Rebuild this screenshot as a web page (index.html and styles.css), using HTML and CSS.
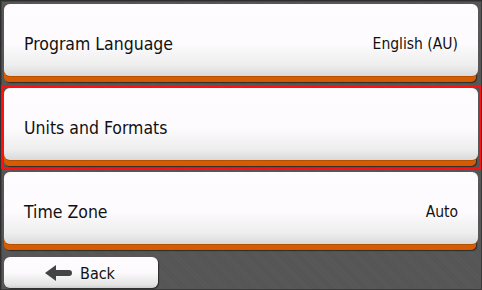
FILE: index.html
```html
<!DOCTYPE html>
<html>
<head>
<meta charset="utf-8">
<link rel="stylesheet" href="styles.css">
</head>
<body>
<div class="screen">
  <div class="row">
    <div class="card">
      <div class="face"><span class="label">Program Language</span><span class="value">English (AU)</span></div>
    </div>
  </div>
  <div class="row selected">
    <div class="card">
      <div class="face"><span class="label">Units and Formats</span></div>
    </div>
  </div>
  <div class="row">
    <div class="card">
      <div class="face"><span class="label">Time Zone</span><span class="value">Auto</span></div>
    </div>
  </div>
  <div class="footer">
    <div class="back">
      <svg class="arrow" width="28" height="16" viewBox="0 0 28 16">
        <path d="M0 8 L11 0 L11 5 L24 5 Q27 5 27 8 Q27 11 24 11 L11 11 L11 16 Z" fill="#444"/>
      </svg>
      <span class="back-label">Back</span>
    </div>
  </div>
</div>
</body>
</html>
```
FILE: styles.css
```css
html, body {
  margin: 0;
  padding: 0;
}
body {
  width: 482px;
  height: 290px;
  overflow: hidden;
  font-family: "DejaVu Sans Condensed", "DejaVu Sans", "Liberation Sans", sans-serif;
  font-stretch: condensed;
  color: #111;
}
.screen {
  box-sizing: border-box;
  width: 482px;
  height: 290px;
  padding-top: 1px;
  background-color: #595959;
  background-image: repeating-linear-gradient(45deg, rgba(0,0,0,0.06) 0 1px, transparent 1px 2px);
  box-shadow: inset 1px 1px 0 #2e2e2e, inset -1px -1px 0 #3a3a3a, inset 2px 2px 0 #444;
  display: flex;
  flex-direction: column;
}
.row {
  box-sizing: border-box;
  height: 84px;
  margin: 0 1px;
  border: 2px solid transparent;
  padding: 1px 1px 1px 1px;
}
.row.selected {
  border-color: #ff1010;
}
.card {
  height: 78px;
  border-radius: 6px 6px 5px 5px;
  margin-right: 2px;
  background: linear-gradient(#f07a10, #d65a00);
  box-shadow: 1px 1px 1px rgba(0,0,0,0.5);
  display: flex;
  flex-direction: column;
}
.face {
  height: 72px;
  margin-right: -2px;
  border-radius: 6px;
  background: linear-gradient(#fefcfe 0%, #fdfbfd 55%, #eeeeee 85%, #d9d9d9 100%);
  box-shadow: 0 1px 0 #b45000;
  display: flex;
  align-items: center;
  justify-content: space-between;
  padding: 7px 20px 0 20px;
  box-sizing: border-box;
}
.label {
  font-size: 17.5px;
}
.value {
  font-size: 15.5px;
}
.footer {
  flex: 1;
  display: flex;
  align-items: flex-end;
  padding: 0 0 2px 4px;
}
.back {
  box-sizing: border-box;
  width: 154px;
  height: 31px;
  border-radius: 6px;
  background: linear-gradient(#fefcfe 0%, #fcfafc 50%, #e4e4e4 90%, #cfcfcf 100%);
  box-shadow: 1px 1px 1px rgba(0,0,0,0.5);
  display: flex;
  align-items: center;
  padding-left: 41px;
  gap: 7px;
}
.arrow {
  display: block;
  margin-top: 1px;
}
.back-label {
  font-size: 16px;
  padding-top: 2px;
}
```
